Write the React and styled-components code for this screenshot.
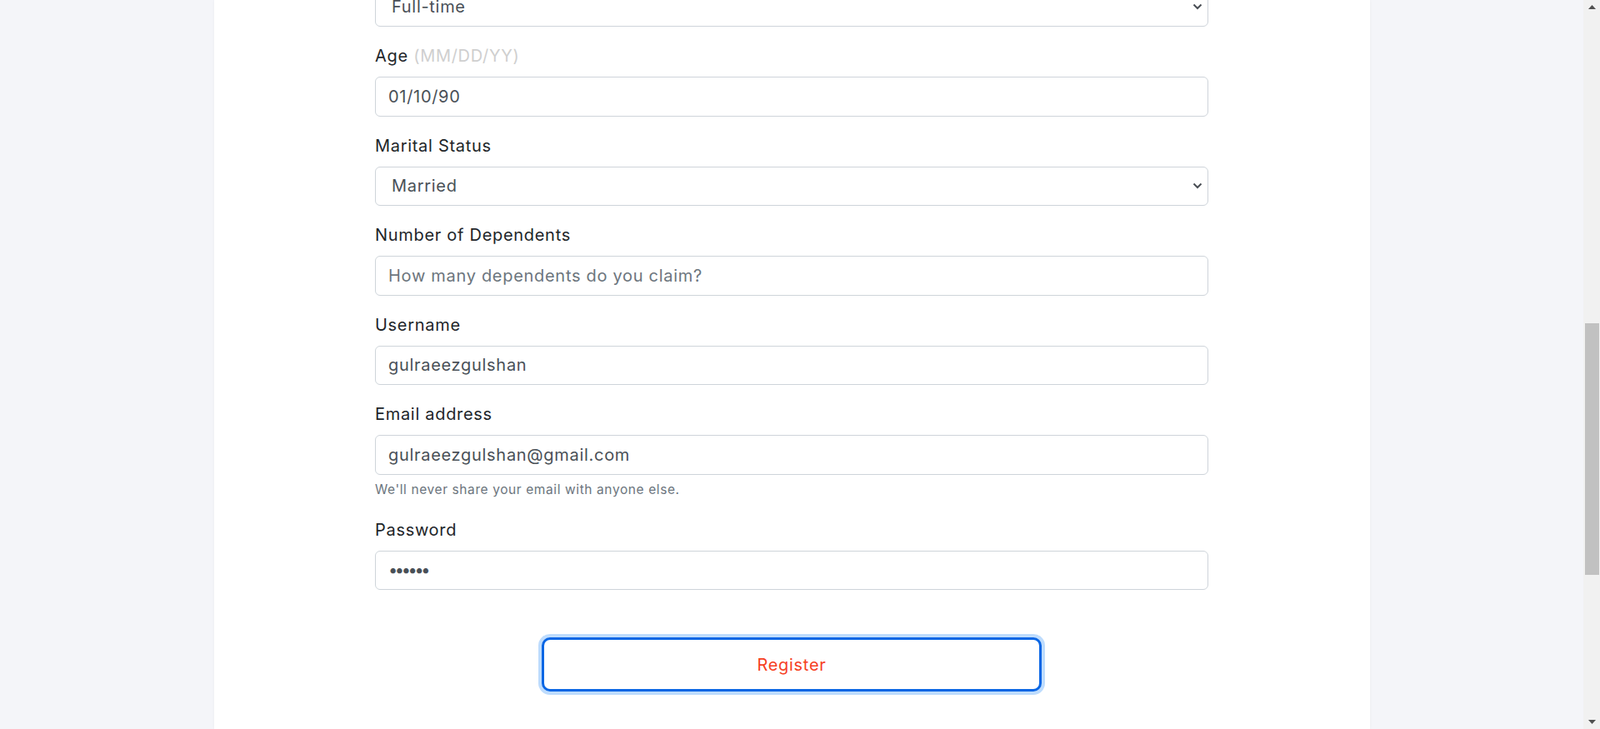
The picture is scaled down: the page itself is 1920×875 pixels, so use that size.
import React from 'react';
import styled, { createGlobalStyle } from 'styled-components';

const GlobalStyle = createGlobalStyle`
  html, body {
    margin: 0;
    padding: 0;
    overflow: hidden;
  }
  body {
    font-family: Inter, "Liberation Sans", sans-serif;
    color: #212529;
  }
  * {
    box-sizing: border-box;
  }
`;

const Page = styled.div`
  display: flex;
  height: 875px;
  background-color: #f4f5f9;
  overflow: hidden;
`;

const Main = styled.div`
  flex: 1;
  display: flex;
  justify-content: center;
`;

const Card = styled.div`
  width: 1387px;
  background-color: #fff;
  box-shadow: 0 0 4px rgba(0, 0, 0, 0.04);
  display: flex;
  flex-direction: column;
  align-items: center;
`;

const Form = styled.form`
  width: 1000px;
  display: flex;
  flex-direction: column;
`;

const Field = styled.div`
  margin-bottom: 20px;
  margin-top: ${props => (props.cut ? '-15.5px' : '0')};
`;

const Label = styled.label`
  display: block;
  font-size: 20px;
  letter-spacing: 0.7px;
  line-height: 30px;
  margin-bottom: 10px;
  color: #212529;
`;

const Hint = styled.span`
  color: #cfcfcf;
`;

const Input = styled.input`
  display: block;
  width: 100%;
  height: 47.5px;
  padding: 7.5px 15px;
  font-family: inherit;
  font-size: 20px;
  letter-spacing: ${props => (props.type === 'password' ? '-3.4px' : '0.7px')};
  color: #495057;
  background-color: #fff;
  border: 1px solid #ced4da;
  border-radius: 6px;
  outline: none;

  &::placeholder {
    color: #6c757d;
  }
`;

const SelectWrap = styled.div`
  position: relative;
`;

const Select = styled.select`
  display: block;
  width: 100%;
  height: 47.5px;
  padding: 7.5px 40px 7.5px 19px;
  font-family: inherit;
  font-size: 20px;
  letter-spacing: 0.7px;
  color: #495057;
  background-color: #fff;
  border: 1px solid #ced4da;
  border-radius: 6px;
  appearance: none;
  outline: none;
`;

const Chevron = styled.svg`
  position: absolute;
  right: 7px;
  top: 50%;
  margin-top: -4px;
  pointer-events: none;
`;

const HelpText = styled.div`
  margin-top: 5px;
  font-size: 15.5px;
  letter-spacing: 0.6px;
  line-height: 26px;
  color: #6c757d;
`;

const ButtonRow = styled.div`
  display: flex;
  justify-content: center;
  margin-top: 37px;
`;

const RegisterButton = styled.button`
  width: 600px;
  height: 65px;
  background-color: #fff;
  border: 3px solid #0a66e4;
  border-radius: 10px;
  box-shadow: 0 0 0 4px #bedcfd;
  color: #f6401f;
  font-family: inherit;
  font-size: 20px;
  letter-spacing: 0.7px;
  cursor: pointer;
`;

const ScrollTrack = styled.div`
  width: 20px;
  background-color: #f1f1f1;
  display: flex;
  flex-direction: column;
  align-items: center;
`;

const ScrollArrow = styled.div`
  height: 17px;
  display: flex;
  align-items: center;
  justify-content: center;
`;

const ScrollSpace = styled.div`
  flex: ${props => props.grow};
`;

const ScrollThumb = styled.div`
  width: 17px;
  height: 302px;
  background-color: #c1c1c1;
`;

const SelectField = ({ value, options }) => (
  <SelectWrap>
    <Select defaultValue={value}>
      {options.map(o => (
        <option key={o}>{o}</option>
      ))}
    </Select>
    <Chevron width="12" height="8" viewBox="0 0 12 8">
      <path d="M1.5 1.5 L6 6 L10.5 1.5" fill="none" stroke="#4a4f55" strokeWidth="2" />
    </Chevron>
  </SelectWrap>
);

export default function App() {
  return (
    <Page>
      <GlobalStyle />
      <Main>
        <Card>
          <Form onSubmit={e => e.preventDefault()}>
            <Field cut>
              <SelectField value="Full-time" options={['Full-time', 'Part-time', 'Unemployed']} />
            </Field>
            <Field>
              <Label>
                Age <Hint>(MM/DD/YY)</Hint>
              </Label>
              <Input type="text" defaultValue="01/10/90" />
            </Field>
            <Field>
              <Label>Marital Status</Label>
              <SelectField value="Married" options={['Single', 'Married', 'Divorced']} />
            </Field>
            <Field>
              <Label>Number of Dependents</Label>
              <Input type="text" placeholder="How many dependents do you claim?" />
            </Field>
            <Field>
              <Label>Username</Label>
              <Input type="text" defaultValue="gulraeezgulshan" />
            </Field>
            <Field>
              <Label>Email address</Label>
              <Input type="email" defaultValue="gulraeezgulshan@gmail.com" />
              <HelpText>We'll never share your email with anyone else.</HelpText>
            </Field>
            <Field>
              <Label>Password</Label>
              <Input type="password" defaultValue="123456" />
            </Field>
            <ButtonRow>
              <RegisterButton type="submit">Register</RegisterButton>
            </ButtonRow>
          </Form>
        </Card>
      </Main>
      <ScrollTrack>
        <ScrollArrow>
          <svg width="9" height="5" viewBox="0 0 9 5">
            <path d="M0 5 L4.5 0 L9 5 Z" fill="#505050" />
          </svg>
        </ScrollArrow>
        <ScrollSpace grow="371" />
        <ScrollThumb />
        <ScrollSpace grow="168" />
        <ScrollArrow>
          <svg width="9" height="5" viewBox="0 0 9 5">
            <path d="M0 0 L4.5 5 L9 0 Z" fill="#505050" />
          </svg>
        </ScrollArrow>
      </ScrollTrack>
    </Page>
  );
}
